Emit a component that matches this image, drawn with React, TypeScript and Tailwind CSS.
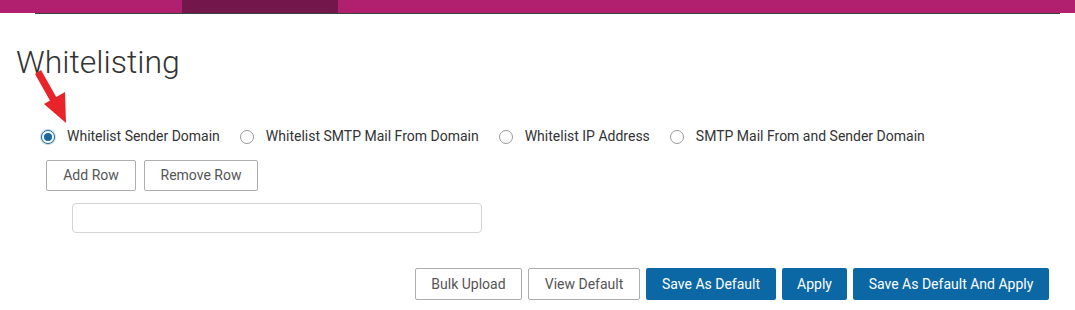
import React, { useState } from 'react';

const options = [
  'Whitelist Sender Domain',
  'Whitelist SMTP Mail From Domain',
  'Whitelist IP Address',
  'SMTP Mail From and Sender Domain',
];

const Radio: React.FC<{ checked: boolean; label: string; onClick: () => void }> = ({ checked, label, onClick }) => (
  <label className="flex items-center cursor-pointer" onClick={onClick}>
    <span
      className={
        checked
          ? 'w-[14px] h-[14px] rounded-full border border-[#1b6aa0] bg-white flex items-center justify-center shadow-[0_0_0_1px_rgba(27,106,160,0.25)]'
          : 'w-[14px] h-[14px] rounded-full border border-[#9a9a9a] bg-white'
      }
    >
      {checked && <span className="w-[8px] h-[8px] rounded-full bg-[#1768a4]" />}
    </span>
    <span className="ml-[12px] text-[14px] text-[#333]">{label}</span>
  </label>
);

const App: React.FC = () => {
  const [selected, setSelected] = useState(0);

  return (
    <div className="relative w-[1075px] h-[310px] bg-white font-['Roboto',sans-serif]">
      {/* top nav strip */}
      <div className="flex h-[13px] bg-[#b11f6f]">
        <div className="w-[182px]" />
        <div className="w-[156px] bg-[#73164b]" />
      </div>
      <div className="flex h-px">
        <div className="w-[35px]" />
        <div className="w-[1025px] bg-[#33473d]" />
      </div>

      <div className="pl-[16px]">
        <h1 className="mt-[29px] text-[32px] leading-[38px] font-light text-[#333]">Whitelisting</h1>

        <div className="mt-[45px] ml-[25px] flex items-center gap-[20px]">
          {options.map((o, i) => (
            <Radio key={o} label={o} checked={selected === i} onClick={() => setSelected(i)} />
          ))}
        </div>

        <div className="mt-[13px] ml-[30px] flex gap-[8px]">
          <button className="h-[31px] w-[90px] border border-[#adadad] rounded-[2px] bg-white text-[14px] text-[#555]">
            Add Row
          </button>
          <button className="h-[31px] w-[114px] border border-[#adadad] rounded-[2px] bg-white text-[14px] text-[#555]">
            Remove Row
          </button>
        </div>

        <div className="mt-[12px] ml-[56px]">
          <input className="w-[410px] h-[30px] border border-[#d4d4d4] rounded-[4px] px-2 text-[14px] outline-none" />
        </div>
      </div>

      <div className="mt-[35px] pr-[26px] flex justify-end gap-[6px]">
        <button className="h-[32px] w-[107px] border border-[#adadad] rounded-[2px] bg-white text-[14px] text-[#555]">
          Bulk Upload
        </button>
        <button className="h-[32px] w-[112px] border border-[#adadad] rounded-[2px] bg-white text-[14px] text-[#555]">
          View Default
        </button>
        <button className="h-[32px] w-[130px] rounded-[2px] bg-[#0b68a5] text-[14px] text-white">
          Save As Default
        </button>
        <button className="h-[32px] w-[65px] rounded-[2px] bg-[#0b68a5] text-[14px] text-white">
          Apply
        </button>
        <button className="h-[32px] w-[196px] rounded-[2px] bg-[#0b68a5] text-[14px] text-white">
          Save As Default And Apply
        </button>
      </div>

      {/* red annotation arrow */}
      <svg className="absolute left-0 top-0 pointer-events-none" width="90" height="130" viewBox="0 0 90 130">
        <polygon points="35,74 41,70 59,102 53,106" fill="#e8232a" />
        <polygon points="66,123 44,104 65,92" fill="#e8232a" />
      </svg>
    </div>
  );
};

export default App;
